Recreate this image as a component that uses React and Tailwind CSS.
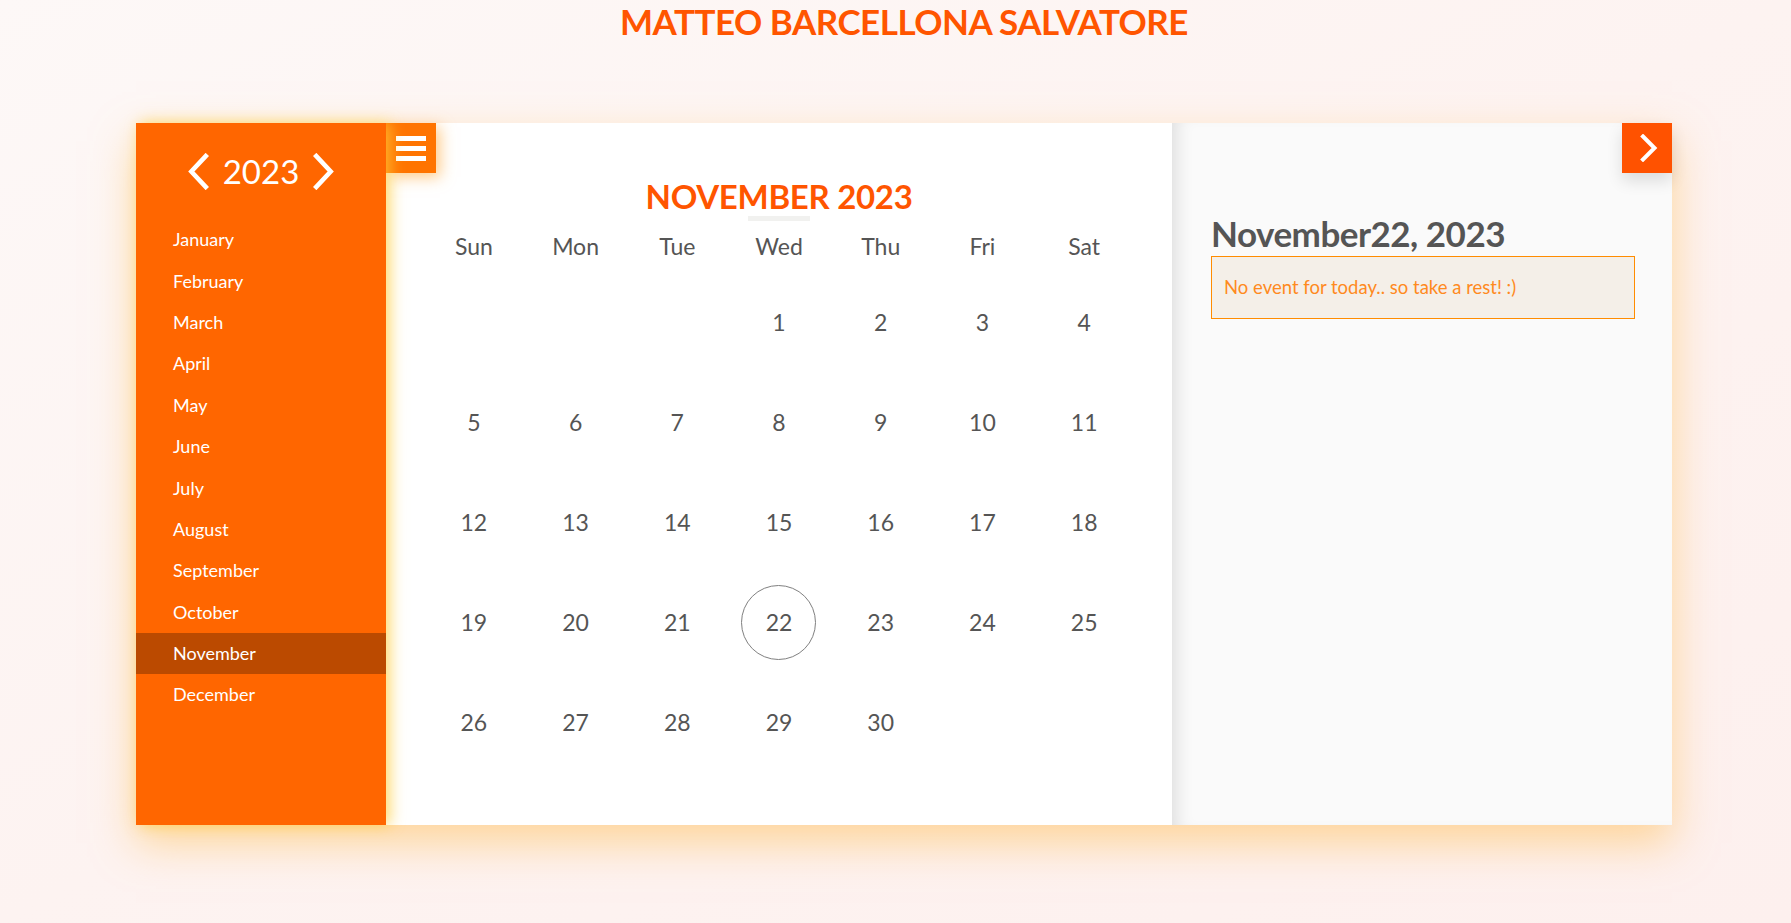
import React from "react";

const months = [
  "January",
  "February",
  "March",
  "April",
  "May",
  "June",
  "July",
  "August",
  "September",
  "October",
  "November",
  "December",
];

const weekDays = ["Sun", "Mon", "Tue", "Wed", "Thu", "Fri", "Sat"];

// November 2023 starts on a Wednesday
const cells = [null, null, null, ...Array.from({ length: 30 }, (_, i) => i + 1)];

const Chevron = ({ dir, className }) => (
  <svg viewBox="0 0 22 36" className={className} fill="none">
    <path
      d={dir === "left" ? "M19 3 L5 18 L19 33" : "M3 3 L17 18 L3 33"}
      stroke="white"
      strokeWidth="4.5"
      strokeLinecap="square"
    />
  </svg>
);

const App = () => {
  return (
    <div
      className="min-h-screen w-full bg-gradient-to-br from-[#fdf8f7] via-[#fdf3f1] to-[#fdf0ee] pb-[98px]"
      style={{ fontFamily: "Lato, 'Open Sans', sans-serif" }}
    >
      <div className="ml-[136px] w-[1536px]">
        <h1 className="h-[42px] flex items-center justify-center text-[35px] font-bold tracking-[-0.5px] text-[#ff5500] leading-none">
          MATTEO BARCELLONA SALVATORE
        </h1>
      </div>

      <main className="mt-[81px] ml-[136px] w-[1536px] h-[702px] flex shadow-[0_18px_40px_rgba(255,185,70,0.5)]">
        {/* sidebar */}
        <aside className="relative z-20 w-[250px] h-full bg-[#ff6600] shadow-[4px_0_14px_rgba(255,205,60,0.75)]">
          <div className="h-[96px] pt-[30px] flex items-start justify-center gap-[14px]">
            <Chevron dir="left" className="w-[23px] h-[37px]" />
            <span className="text-[33px] leading-[37px] text-white">2023</span>
            <Chevron dir="right" className="w-[23px] h-[37px]" />
          </div>
          <ul className="text-[18px] text-white">
            {months.map((m) => (
              <li
                key={m}
                className={`h-[41.4px] flex items-center pl-[37px] ${
                  m === "November" ? "bg-[#bb4a00]" : ""
                }`}
              >
                {m}
              </li>
            ))}
          </ul>
        </aside>

        {/* calendar */}
        <section className="relative z-10 w-[786px] h-full bg-white">
          <button className="absolute left-0 top-0 w-[50px] h-[50px] bg-[#ff7400] flex flex-col items-center justify-center gap-[5px] shadow-[4px_4px_14px_rgba(255,160,40,0.55)]">
            <span className="block w-[30px] h-[5px] bg-white"></span>
            <span className="block w-[30px] h-[5px] bg-white"></span>
            <span className="block w-[30px] h-[5px] bg-white"></span>
          </button>

          <div className="pt-[48px] flex flex-col items-center">
            <h2 className="h-[45px] text-[33px] leading-[50px] font-bold text-[#ff5500] tracking-[-0.3px]">
              NOVEMBER 2023
            </h2>
            <div className="w-[62px] h-[5px] bg-[#f1f1ef]"></div>
          </div>

          <div className="px-[37px] mt-[5px]">
            <div className="grid grid-cols-7 h-[40px] items-center text-center text-[23px] text-[#555]">
              {weekDays.map((d) => (
                <div key={d}>{d}</div>
              ))}
            </div>
            <div className="grid grid-cols-7 mt-[6px] text-[23px] text-[#555]">
              {cells.map((d, i) => (
                <div key={i} className="h-[100px] flex items-center justify-center">
                  {d && (
                    <span
                      className={`w-[75px] h-[75px] rounded-full flex items-center justify-center ${
                        d === 22 ? "border border-[#808080]" : ""
                      }`}
                    >
                      {d}
                    </span>
                  )}
                </div>
              ))}
            </div>
          </div>
        </section>

        {/* day detail */}
        <section className="relative w-[500px] h-full bg-[#fafafa] shadow-[inset_16px_0_18px_-12px_rgba(0,0,0,0.12)] pl-[39px] pr-[37px]">
          <button className="absolute right-0 top-0 w-[50px] h-[50px] bg-[#ff5200] flex items-center justify-center shadow-[0_8px_16px_rgba(0,0,0,0.12)]">
            <svg viewBox="0 0 18 28" className="w-[18px] h-[28px] ml-[4px]" fill="none">
              <path d="M3 2.5 L14.5 14 L3 25.5" stroke="white" strokeWidth="4" strokeLinecap="square" />
            </svg>
          </button>
          <h3 className="pt-[90px] h-[133px] text-[35px] leading-[40px] font-bold text-[#555] tracking-[-0.5px]">
            November22, 2023
          </h3>
          <div className="h-[63px] border border-[#ff8c00] bg-[#f4efe8] flex items-center pl-[12px] pt-[1px] text-[18.5px] text-[#ff8a1e]">
            No event for today.. so take a rest! :)
          </div>
        </section>
      </main>
    </div>
  );
};

export default App;
